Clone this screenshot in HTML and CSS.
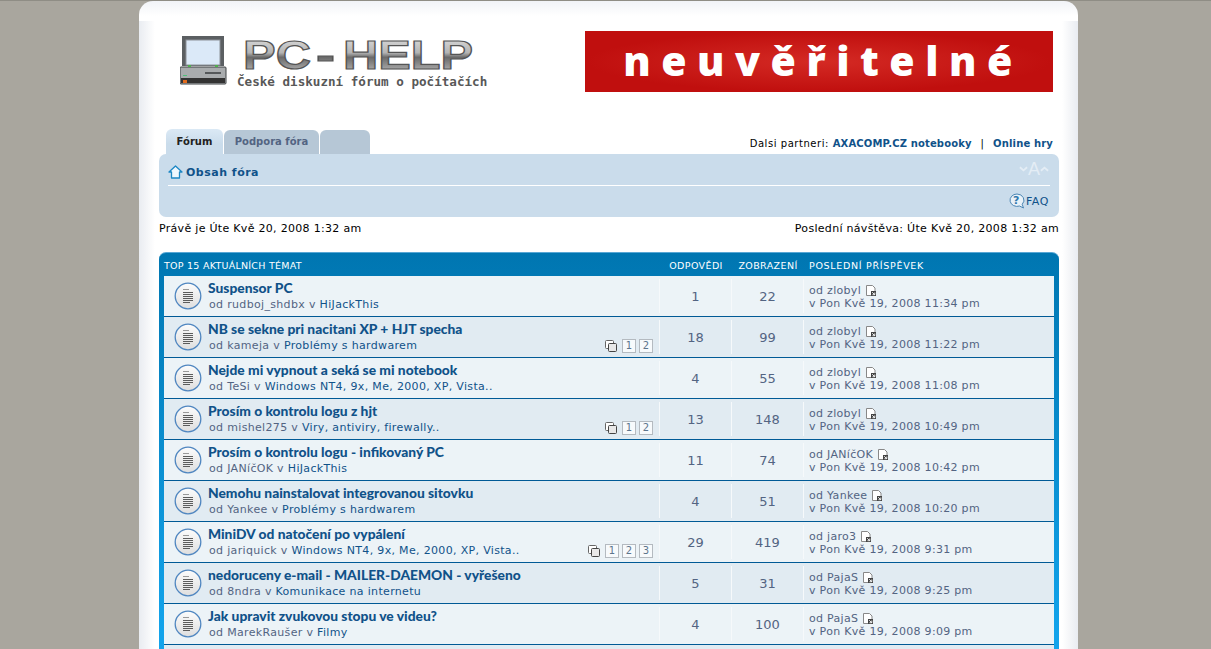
FILE: index.html
```html
<!DOCTYPE html>
<html lang="cs">
<head>
<meta charset="utf-8">
<title>PC-HELP</title>
<link rel="stylesheet" href="styles.css">
</head>
<body>
<svg class="defs" width="0" height="0" aria-hidden="true">
  <defs>
    <linearGradient id="chrome" x1="0" y1="0" x2="0" y2="1">
      <stop offset="0" stop-color="#e8e8e8"/><stop offset=".45" stop-color="#b4b4b4"/><stop offset=".55" stop-color="#6a6a6a"/><stop offset="1" stop-color="#cfcfcf"/>
    </linearGradient>
    <linearGradient id="disc" x1="0" y1="0" x2="0" y2="1">
      <stop offset="0" stop-color="#fcfcfc"/><stop offset="1" stop-color="#dedede"/>
    </linearGradient>
    <symbol id="topic" viewBox="0 0 28 28">
      <circle cx="14" cy="14" r="12.800" fill="url(#disc)" stroke="#4f86c0" stroke-width="1.300"/>
      <path d="M9 7.500h6" stroke="#999" stroke-width="1" fill="none"/>
      <path d="M9 10.500h10M9 12.500h10M9 14.500h10M9 16.500h10M9 18.500h10M9 20.500h7" stroke="#5c5c5c" stroke-width="1" fill="none"/>
    </symbol>
    <symbol id="latest" viewBox="0 0 10 11">
      <path d="M5 10.500H.5V.5h6l2.500 2.500v3" fill="#fff" stroke="#888"/>
      <path d="M5 6h5v5H5z" fill="#444"/><path d="M6.200 7.200l2.500 2.500M8.800 7.500v2.200H6.500" stroke="#fff" stroke-width=".9" fill="none"/>
    </symbol>
    <symbol id="pages" viewBox="0 0 12 12">
      <rect x=".5" y=".5" width="8" height="8" rx="1" fill="#fff" stroke="#666"/>
      <rect x="3.500" y="3.500" width="8" height="8" rx="1" fill="#e8e8e8" stroke="#444"/>
    </symbol>
  </defs>
</svg>
<div class="wrap">
  <header class="head">
    <div class="logo">
      <svg class="pc" width="50" height="54" viewBox="0 0 50 54">
        <rect x="2" y="1" width="42" height="30" fill="#5b5f62"/>
        <rect x="6" y="5" width="34" height="25" fill="#dbe9f8" stroke="#8d9298"/>
        <rect x="0" y="32" width="46" height="17" rx="1" fill="#a9acae" stroke="#3f4244"/>
        <rect x="1" y="43" width="44" height="5" fill="#333"/>
        <rect x="3" y="45" width="4" height="3" fill="#e26a1c"/>
        <rect x="3" y="40" width="4" height="1" fill="#4fc07a"/>
        <rect x="25" y="37" width="16" height="2" fill="#55585a"/>
        <rect x="8" y="30" width="3" height="2" fill="#4fb04f"/><rect x="35" y="30" width="3" height="2" fill="#4fb04f"/>
      </svg>
      <div class="brand">
        <svg class="word" width="240" height="42" viewBox="0 0 240 42">
          <text x="1" y="34" textLength="68" lengthAdjust="spacingAndGlyphs" class="wordtext">PC</text>
          <text x="74" y="34" textLength="19" lengthAdjust="spacingAndGlyphs" class="wordtext">-</text>
          <text x="101" y="34" textLength="130" lengthAdjust="spacingAndGlyphs" class="wordtext">HELP</text>
        </svg>
        <div class="tag">České diskuzní fórum o počítačích</div>
      </div>
    </div>
    <div class="banner">neuvěřitelné</div>
  </header>

  <div class="tabline">
    <nav class="tabs">
      <a class="tab on">Fórum</a>
      <a class="tab">Podpora fóra</a>
      <a class="tab empty"></a>
    </nav>
    <div class="partners">Dalsi partneri: <a>AXACOMP.CZ notebooky</a> <span class="pipe">|</span> <a>Online hry</a></div>
  </div>

  <div class="navbar">
    <div class="crumb">
      <a class="home"><svg width="15" height="14" viewBox="0 0 15 14"><path d="M7.500 1L1 7h2.500v6h8V7H14z" fill="#eef7fd" stroke="#1d87c4" stroke-width="1.300" stroke-linejoin="round"/></svg>Obsah fóra</a>
      <span class="resize"><svg width="9" height="6" viewBox="0 0 10 6"><path d="M1 1l4 3.500L9 1" fill="none" stroke="#e4edf5" stroke-width="2"/></svg>A<svg width="9" height="6" viewBox="0 0 10 6"><path d="M1 5l4-3.500L9 5" fill="none" stroke="#e4edf5" stroke-width="2"/></svg></span>
    </div>
    <div class="faq"><svg width="16" height="16" viewBox="0 0 16 16"><path d="M8 1a7 6.200 0 1 0 2.500 12l4 2-1.300-3.700A7 6.200 0 0 0 8 1z" fill="#e8f1f8" stroke="#4b86b4"/><text x="7.500" y="11" class="q">?</text></svg><a>FAQ</a></div>
  </div>

  <div class="times"><span>Právě je Úte Kvě 20, 2008 1:32 am</span><span>Poslední návštěva: Úte Kvě 20, 2008 1:32 am</span></div>

  <section class="forum">
    <div class="cols hdr">
      <div class="h-topic">TOP 15 AKTUÁLNÍCH TÉMAT</div>
      <div class="h-num">ODPOVĚDI</div>
      <div class="h-num">ZOBRAZENÍ</div>
      <div class="h-last">POSLEDNÍ PŘÍSPĚVEK</div>
    </div>
    <div class="list">
      <article class="cols row">
        <div class="topic"><svg class="ticon"><use href="#topic"/></svg><div class="tbody"><a class="title">Suspensor PC</a><div class="meta">od rudboj_shdbx v <a>HiJackThis</a></div></div></div>
        <div class="num">1</div><div class="num">22</div>
        <div class="last">od zlobyl <svg class="li"><use href="#latest"/></svg><br>v Pon Kvě 19, 2008 11:34 pm</div>
      </article>
      <article class="cols row alt">
        <div class="topic"><svg class="ticon"><use href="#topic"/></svg><div class="tbody"><a class="title">NB se sekne pri nacitani XP + HJT specha</a><div class="meta">od kameja v <a>Problémy s hardwarem</a></div></div>
          <div class="pg"><svg class="pi"><use href="#pages"/></svg><b>1</b><b>2</b></div></div>
        <div class="num">18</div><div class="num">99</div>
        <div class="last">od zlobyl <svg class="li"><use href="#latest"/></svg><br>v Pon Kvě 19, 2008 11:22 pm</div>
      </article>
      <article class="cols row">
        <div class="topic"><svg class="ticon"><use href="#topic"/></svg><div class="tbody"><a class="title">Nejde mi vypnout a seká se mi notebook</a><div class="meta">od TeSi v <a>Windows NT4, 9x, Me, 2000, XP, Vista..</a></div></div></div>
        <div class="num">4</div><div class="num">55</div>
        <div class="last">od zlobyl <svg class="li"><use href="#latest"/></svg><br>v Pon Kvě 19, 2008 11:08 pm</div>
      </article>
      <article class="cols row alt">
        <div class="topic"><svg class="ticon"><use href="#topic"/></svg><div class="tbody"><a class="title">Prosím o kontrolu logu z hjt</a><div class="meta">od mishel275 v <a>Viry, antiviry, firewally..</a></div></div>
          <div class="pg"><svg class="pi"><use href="#pages"/></svg><b>1</b><b>2</b></div></div>
        <div class="num">13</div><div class="num">148</div>
        <div class="last">od zlobyl <svg class="li"><use href="#latest"/></svg><br>v Pon Kvě 19, 2008 10:49 pm</div>
      </article>
      <article class="cols row">
        <div class="topic"><svg class="ticon"><use href="#topic"/></svg><div class="tbody"><a class="title">Prosím o kontrolu logu - infikovaný PC</a><div class="meta">od JANíčOK v <a>HiJackThis</a></div></div></div>
        <div class="num">11</div><div class="num">74</div>
        <div class="last">od JANíčOK <svg class="li"><use href="#latest"/></svg><br>v Pon Kvě 19, 2008 10:42 pm</div>
      </article>
      <article class="cols row alt">
        <div class="topic"><svg class="ticon"><use href="#topic"/></svg><div class="tbody"><a class="title">Nemohu nainstalovat integrovanou sitovku</a><div class="meta">od Yankee v <a>Problémy s hardwarem</a></div></div></div>
        <div class="num">4</div><div class="num">51</div>
        <div class="last">od Yankee <svg class="li"><use href="#latest"/></svg><br>v Pon Kvě 19, 2008 10:20 pm</div>
      </article>
      <article class="cols row">
        <div class="topic"><svg class="ticon"><use href="#topic"/></svg><div class="tbody"><a class="title">MiniDV od natočení po vypálení</a><div class="meta">od jariquick v <a>Windows NT4, 9x, Me, 2000, XP, Vista..</a></div></div>
          <div class="pg"><svg class="pi"><use href="#pages"/></svg><b>1</b><b>2</b><b>3</b></div></div>
        <div class="num">29</div><div class="num">419</div>
        <div class="last">od jaro3 <svg class="li"><use href="#latest"/></svg><br>v Pon Kvě 19, 2008 9:31 pm</div>
      </article>
      <article class="cols row alt">
        <div class="topic"><svg class="ticon"><use href="#topic"/></svg><div class="tbody"><a class="title">nedoruceny e-mail - MAILER-DAEMON - vyřešeno</a><div class="meta">od 8ndra v <a>Komunikace na internetu</a></div></div></div>
        <div class="num">5</div><div class="num">31</div>
        <div class="last">od PajaS <svg class="li"><use href="#latest"/></svg><br>v Pon Kvě 19, 2008 9:25 pm</div>
      </article>
      <article class="cols row">
        <div class="topic"><svg class="ticon"><use href="#topic"/></svg><div class="tbody"><a class="title">Jak upravit zvukovou stopu ve videu?</a><div class="meta">od MarekRaušer v <a>Filmy</a></div></div></div>
        <div class="num">4</div><div class="num">100</div>
        <div class="last">od PajaS <svg class="li"><use href="#latest"/></svg><br>v Pon Kvě 19, 2008 9:09 pm</div>
      </article>
      <div class="row alt"></div>
    </div>
  </section>
</div>
</body>
</html>
```
FILE: styles.css
```css
* { box-sizing: border-box; }
html, body { margin: 0; height: 100%; overflow: hidden; }
body { background: #a9a69e; border-top: 1px solid #8f8d85; font-family: "DejaVu Sans", sans-serif; font-size: 11px; color: #000; }
.defs { position: absolute; }
.wrap {
  width: 939px; height: 800px; margin: 0 0 0 139px; padding: 0 19px 0 20px;
  border-radius: 14px 14px 0 0;
  background:
    linear-gradient(180deg, #f1f3f7, #fff 15px) top / 100% 20px no-repeat,
    linear-gradient(90deg, #e9ecf1, #fff 16px, #fff calc(100% - 16px), #e9ecf1);
}
.head { display: flex; justify-content: space-between; height: 128px; padding: 30px 6px 0 21px; }
.logo { display: flex; gap: 7px; padding-top: 4px; height: 70px; }
.pc { display: block; }
.brand { padding-top: 0; }
.word { display: block; margin-left: 5px; height: 42px; margin-bottom: -5px; overflow: visible; }
.wordtext { font: bold 41px "Liberation Sans", sans-serif; fill: url(#chrome); stroke: #555; stroke-width: 1.200px; }
.tag { font: bold 12.6px "DejaVu Sans Mono", monospace; color: #585858; line-height: 14px; margin-top: 3px; white-space: nowrap; }
.banner {
  width: 468px; height: 61px; text-align: center; color: #fff; font: 800 41px/59px "Open Sans", sans-serif; letter-spacing: 10.5px; padding-left: 8px; white-space: nowrap;
  background: radial-gradient(ellipse at center, #d42a24, #c00f0e 70%);
}
.tabline { display: flex; justify-content: space-between; align-items: flex-end; height: 25px; padding: 0 6px 0 7px; }
.tabs { display: flex; gap: 1px; align-items: flex-end; height: 25px; }
.tab { display: block; width: 95px; text-align: center; height: 24px; border-radius: 6px 6px 0 0; background: #b6c7d6; color: #536482; font: bold 10px/24px "DejaVu Sans", sans-serif; }
.tab.on { width: 57px; height: 25px; background: linear-gradient(#dbe9f5, #cadceb 60%); color: #222; line-height: 26px; }
.tab.empty { width: 50px; }
.partners { font-size: 10px; letter-spacing: .55px; color: #000; padding-bottom: 5px; white-space: nowrap; }
.partners a { color: #105289; font-weight: bold; letter-spacing: .15px; }
.pipe { margin: 0 5px; }
.navbar { height: 63px; background: #cadceb; border-radius: 7px; padding: 0 9px 0 9px; }
.crumb { display: flex; justify-content: space-between; align-items: center; height: 32px; border-bottom: 1px solid #fff; padding-top: 4px; }
.home { display: flex; align-items: center; gap: 3px; color: #105289; font-weight: bold; font-size: 11px; letter-spacing: .5px; margin-top: 1px; }
.resize { display: flex; align-items: center; gap: 0; color: #e4edf5; font: 18px/18px "Liberation Sans", sans-serif; margin: -6px 0 0 0; padding-right: 1px; }
.faq { display: flex; justify-content: flex-end; align-items: center; gap: 1px; height: 30px; color: #105289; font-size: 11px; letter-spacing: .6px; padding-right: 1px; }
.q { font: bold 11px "DejaVu Sans", sans-serif; fill: #2f78ad; text-anchor: middle; }
.times { display: flex; justify-content: space-between; height: 35px; padding-top: 5px; line-height: 14px; letter-spacing: .3px; }
.forum { background: linear-gradient(#0076b1, #12a3eb 380px); border-radius: 7px 7px 0 0; padding: 0 5px; border-top: 1px solid #58a7d5; }
.cols { display: grid; grid-template-columns: 496px 72px 72px 1fr; }
.hdr { height: 23px; align-items: center; color: #fff; font-size: 9.500px; margin: 0 -5px; padding: 1px 5px 0; }
.h-topic { letter-spacing: .25px; }
.h-num { text-align: center; letter-spacing: .4px; }
.h-last { padding-left: 5px; letter-spacing: .7px; }
.row { height: 41px; background: #ecf3f7; border-bottom: 1px solid #005a96; }
.row.alt { background: #e1ebf2; }
.topic { position: relative; display: flex; align-items: flex-start; gap: 6px; padding: 3px 0 0 10px; border-right: 1px solid #f6f9fb; height: 34px; margin-top: 3px; }
.ticon { width: 28px; height: 28px; flex: none; }
.tbody { margin-top: -2px; }
.title { display: block; color: #105289; font: 900 13.8px/16px "Lato", sans-serif; white-space: nowrap; }
.meta { color: #536482; font-size: 11px; line-height: 15px; letter-spacing: .33px; white-space: nowrap; margin-left: 1px; margin-top: 1px; }
.meta a { color: #105289; }
.pg { position: absolute; right: 6px; bottom: 1px; display: flex; align-items: center; gap: 3px; }
.pg b { display: block; width: 14px; height: 14px; border: 1px solid #b4bac0; background: #f7fafc; color: #5c758c; font: 10px/12px "DejaVu Sans", sans-serif; text-align: center; }
.pi { width: 12px; height: 12px; margin-right: 2px; }
.num { height: 34px; margin-top: 3px; border-right: 1px solid #f6f9fb; text-align: center; line-height: 36px; font-size: 13px; color: #536482; }
.last { padding: 8px 0 0 5px; line-height: 13px; color: #536482; letter-spacing: .3px; white-space: nowrap; }
.li { width: 10px; height: 11px; vertical-align: -2px; margin-left: 1px; }
```
